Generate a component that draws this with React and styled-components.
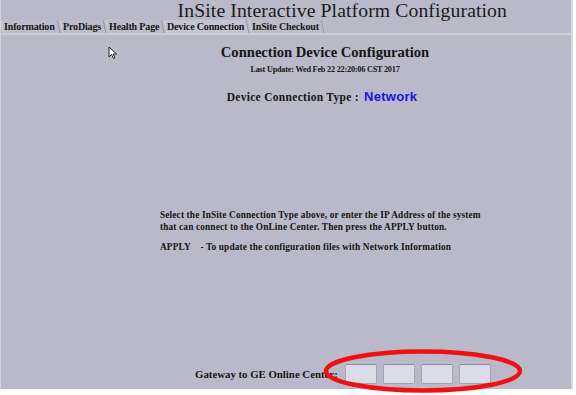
import React from 'react'
import styled, { createGlobalStyle } from 'styled-components'

const GlobalStyle = createGlobalStyle`
    html, body {
        margin : 0;
        padding : 0;
        background : #ffffff;
    }
`

const Screen = styled.div`
    position : relative;
    width : 576px;
    height : 395px;
    overflow : hidden;
    background : #ffffff;
    font-family : "Liberation Serif", "DejaVu Serif", serif;
    color : #161616;
`

const Frame = styled.div`
    display : flex;
    flex-direction : column;
    width : 573px;
    height : 389px;
    background : #b9b9c9;
    border-left : 1px solid #d4d4e0;
    border-right : 2px solid #d8d8e4;
    box-sizing : border-box;
`

const Title = styled.div`
    height : 19px;
    padding-right : 64px;
    text-align : right;
    font-size : 19.7px;
    line-height : 21px;
    letter-spacing : 0.1px;
    color : #1c1c1c;
`

const TabBar = styled.div`
    display : flex;
    height : 13px;
    padding-left : 1px;
    border-bottom : 2px solid #cfcfdb;
    margin-top : 1px;
`

const Tab = styled.div`
    display : flex;
    align-items : center;
    padding : 0 3px 0 1px;
    margin-right : 2px;
    font-size : 10px;
    font-weight : bold;
    letter-spacing : -0.15px;
    background : ${p => (p.active ? '#c4c4d2' : '#bcbccb')};
    border-right : 1px solid #9a9aac;
    border-left : 1px solid #d0d0dc;
    transform : skewX(12deg);
    & > span {
        transform : skewX(-12deg);
    }
`

const Content = styled.div`
    flex : 1;
    display : flex;
    flex-direction : column;
    align-items : center;
`

const Heading = styled.div`
    margin-top : 9px;
    padding-left : 78px;
    font-size : 14.6px;
    font-weight : bold;
    line-height : 17px;
`

const Updated = styled.div`
    margin-top : 4px;
    padding-left : 78px;
    font-size : 8.2px;
    font-weight : bold;
    letter-spacing : -0.2px;
`

const TypeRow = styled.div`
    display : flex;
    align-items : baseline;
    gap : 5px;
    margin-top : 15px;
    padding-left : 72px;
    font-size : 11.5px;
    font-weight : bold;
    letter-spacing : 0.3px;
`

const TypeValue = styled.span`
    font-family : "Liberation Sans", Arial, sans-serif;
    font-size : 13px;
    color : #1414f0;
`

const Notes = styled.div`
    align-self : flex-start;
    margin-top : 105px;
    margin-left : 159px;
    font-size : 9.3px;
    font-weight : bold;
    line-height : 12px;
    letter-spacing : 0.15px;
`

const NoteGap = styled.div`
    height : 8px;
`

const GatewayRow = styled.div`
    display : flex;
    align-items : center;
    align-self : flex-start;
    margin-top : auto;
    margin-bottom : 5px;
    margin-left : 194px;
`

const GatewayLabel = styled.span`
    font-size : 10.8px;
    font-weight : bold;
    margin-right : 7px;
`

const Octets = styled.div`
    display : flex;
    gap : 6px;
`

const Octet = styled.div`
    width : 32px;
    height : 20px;
    box-sizing : border-box;
    background : #dcdce8;
    border : 1px solid #a4a4b6;
    border-top-color : #8c8ca0;
    border-radius : 2px;
`

const Ring = styled.svg`
    position : absolute;
    left : 323px;
    top : 349px;
    overflow : visible;
`

const Pointer = styled.svg`
    position : absolute;
    left : 108px;
    top : 46px;
`

const tabs = ['Information', 'ProDiags', 'Health Page', 'Device Connection', 'InSite Checkout']

const App = () => {
    return <Screen>
        <GlobalStyle />
        <Frame>
            <Title>InSite Interactive Platform Configuration</Title>
            <TabBar>
                {tabs.map(t => <Tab key={t} active={t === 'Device Connection'}><span>{t}</span></Tab>)}
            </TabBar>
            <Content>
                <Heading>Connection Device Configuration</Heading>
                <Updated>Last Update: Wed Feb 22 22:20:06 CST 2017</Updated>
                <TypeRow>
                    <span>Device Connection Type :</span>
                    <TypeValue>Network</TypeValue>
                </TypeRow>
                <Notes>
                    <div>Select the InSite Connection Type above, or enter the IP Address of the system</div>
                    <div>that can connect to the OnLine Center. Then press the APPLY button.</div>
                    <NoteGap />
                    <div>APPLY &nbsp;&nbsp; - To update the configuration files with Network Information</div>
                </Notes>
                <GatewayRow>
                    <GatewayLabel>Gateway to GE Online Center:</GatewayLabel>
                    <Octets>
                        <Octet />
                        <Octet />
                        <Octet />
                        <Octet />
                    </Octets>
                </GatewayRow>
            </Content>
        </Frame>
        <Ring width="200" height="44" viewBox="0 0 200 44">
            <ellipse cx="100" cy="22" rx="97" ry="19.5" fill="none" stroke="#f01010" strokeWidth="4.5" />
        </Ring>
        <Pointer width="10" height="14" viewBox="0 0 10 14">
            <path d="M1 1 L1 11 L3.5 8.5 L5.5 12.5 L7 11.8 L5 8 L8.5 8 Z" fill="#ffffff" stroke="#222" strokeWidth="1" strokeLinejoin="round" />
        </Pointer>
    </Screen>
}

export default App
